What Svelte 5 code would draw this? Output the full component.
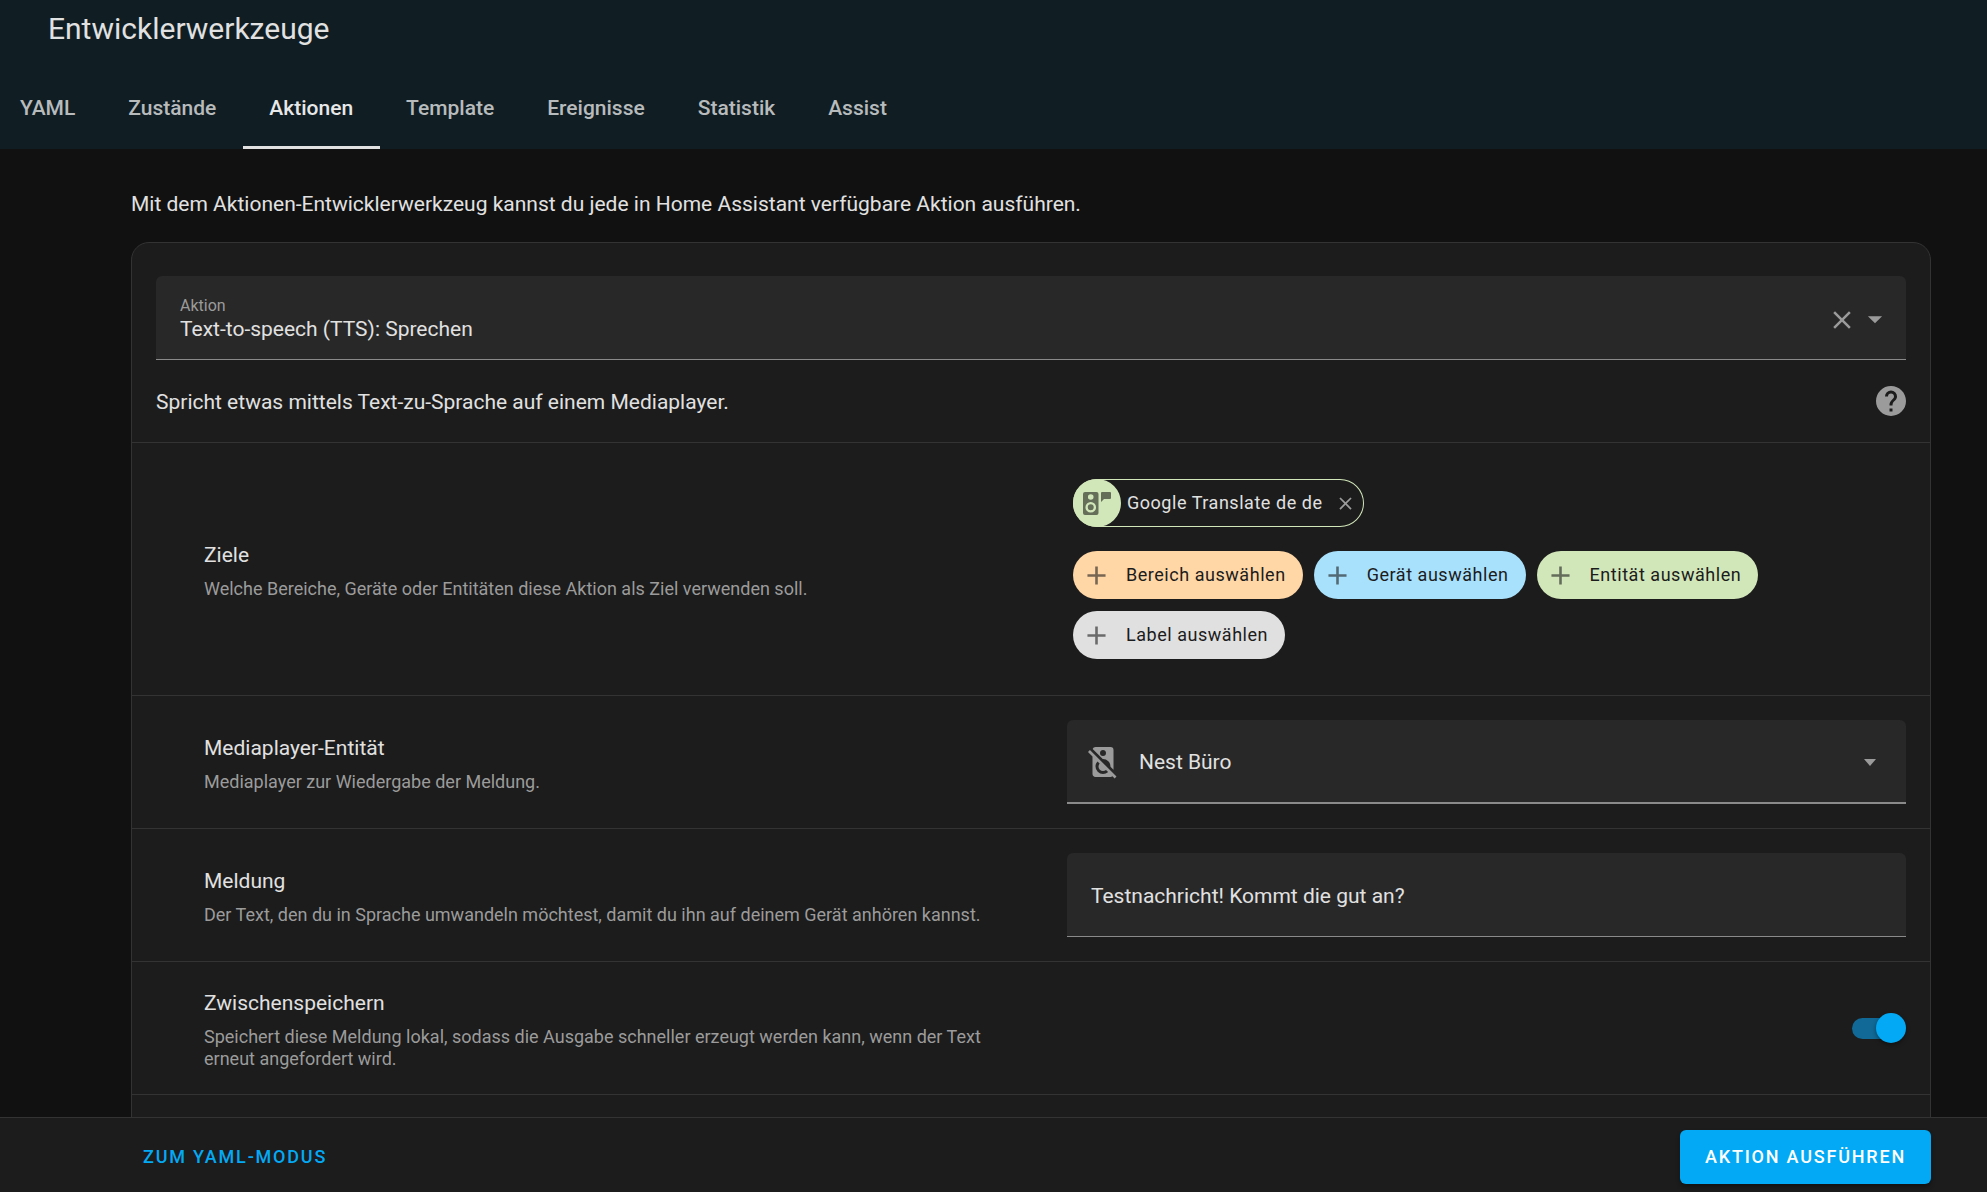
<script lang="ts">
  type Picker = {
    label: string;
    kind: string;
  };

  const tabs = ["YAML", "Zustände", "Aktionen", "Template", "Ereignisse", "Statistik", "Assist"];
  const pickers: Picker[] = [
    { label: "Bereich auswählen", kind: "area" },
    { label: "Gerät auswählen", kind: "device" },
    { label: "Entität auswählen", kind: "entity" },
    { label: "Label auswählen", kind: "label" }
  ];

  let activeTab = "Aktionen";
  let action = "Text-to-speech (TTS): Sprechen";
  let targets = ["Google Translate de de"];
  let player = "Nest Büro";
  let message = "Testnachricht! Kommt die gut an?";
  let cache = true;

  function removeTarget(name: string): void {
    targets = targets.filter((target) => target !== name);
  }
</script>

<div class="page">
  <header class="header">
    <h1 class="title">Entwicklerwerkzeuge</h1>
    <nav class="tabs">
      {#each tabs as tab}
        <button class="tab" class:active={tab === activeTab} type="button" onclick={() => (activeTab = tab)}>
          {tab}
        </button>
      {/each}
    </nav>
  </header>

  <main class="content">
    <p class="intro">Mit dem Aktionen-Entwicklerwerkzeug kannst du jede in Home Assistant verfügbare Aktion ausführen.</p>

    <section class="card">
      <div class="card-top">
        <div class="field action-field">
          <div class="action-text">
            <label for="action">Aktion</label>
            <input id="action" type="text" role="combobox" aria-expanded="false" aria-controls="action" bind:value={action} />
          </div>
          <button class="icon-button" type="button" aria-label="Löschen" onclick={() => (action = "")}>
            <svg class="icon-close" viewBox="0 0 24 24"><path d="M19,6.41L17.59,5L12,10.59L6.41,5L5,6.41L10.59,12L5,17.59L6.41,19L12,13.41L17.59,19L19,17.59L13.41,12L19,6.41Z" /></svg>
          </button>
          <button class="icon-button" type="button" aria-label="Öffnen">
            <svg class="icon-caret" viewBox="0 0 24 24"><path d="M7,10L12,15L17,10H7Z" /></svg>
          </button>
        </div>
        <div class="about">
          <p>Spricht etwas mittels Text-zu-Sprache auf einem Mediaplayer.</p>
          <button class="icon-button help" type="button" aria-label="Hilfe">
            <svg viewBox="2 2 20 20"><path d="M15.07,11.25L14.17,12.17C13.45,12.89 13,13.5 13,15H11V14.5C11,13.39 11.45,12.39 12.17,11.67L13.41,10.41C13.78,10.05 14,9.55 14,9C14,7.89 13.1,7 12,7A2,2 0 0,0 10,9H8A4,4 0 0,1 12,5A4,4 0 0,1 16,9C16,9.88 15.64,10.67 15.07,11.25M13,19H11V17H13M12,2A10,10 0 0,0 2,12A10,10 0 0,0 12,22A10,10 0 0,0 22,12C22,6.47 17.5,2 12,2Z" /></svg>
          </button>
        </div>
      </div>

      <div class="row targets">
        <div class="text">
          <h2>Ziele</h2>
          <p>Welche Bereiche, Geräte oder Entitäten diese Aktion als Ziel verwenden soll.</p>
        </div>
        <div class="control chips">
          <div class="chip-line">
            {#each targets as target}
              <div class="chip target">
                <span class="avatar">
                  <svg viewBox="0 0 28 23">
                    <path fill-rule="evenodd" d="M2,0H13.500A2,2 0 0,1 15.500,2V21A2,2 0 0,1 13.500,23H2A2,2 0 0,1 0,21V2A2,2 0 0,1 2,0M7.750,2.200A2.800,2.800 0 1,0 7.750,7.800A2.800,2.800 0 1,0 7.750,2.200M7.750,10A5.300,5.300 0 1,0 7.750,20.600A5.300,5.300 0 1,0 7.750,10M7.750,12.300A3,3 0 1,1 7.750,18.300A3,3 0 1,1 7.750,12.300Z" />
                    <path d="M19,0H27A1,1 0 0,1 28,1V6A1,1 0 0,1 27,7H21L18,10V1A1,1 0 0,1 19,0Z" />
                  </svg>
                </span>
                <span>{target}</span>
                <button class="icon-button remove" type="button" aria-label="Entfernen" onclick={() => removeTarget(target)}>
                  <svg viewBox="0 0 24 24"><path d="M19,6.41L17.59,5L12,10.59L6.41,5L5,6.41L10.59,12L5,17.59L6.41,19L12,13.41L17.59,19L19,17.59L13.41,12L19,6.41Z" /></svg>
                </button>
              </div>
            {/each}
          </div>
          <div class="chip-line">
            {#each pickers as picker}
              <button class="chip add {picker.kind}" type="button">
                <svg viewBox="0 0 24 24"><path d="M19,13H13V19H11V13H5V11H11V5H13V11H19V13Z" /></svg>
                <span>{picker.label}</span>
              </button>
            {/each}
          </div>
        </div>
      </div>

      <div class="row">
        <div class="text">
          <h2><label for="player">Mediaplayer-Entität</label></h2>
          <p>Mediaplayer zur Wiedergabe der Meldung.</p>
        </div>
        <div class="control field player">
          <svg class="speaker" viewBox="0 0 24 24"><path d="M2,5.27L3.28,4L21,21.72L19.73,23L18.27,21.54C17.93,21.83 17.5,22 17,22H7C5.89,22 5,21.1 5,20V8.27L2,5.27M12,18A3,3 0 0,1 9,15C9,14.24 9.28,13.54 9.75,13L8.33,11.6C7.5,12.5 7,13.69 7,15A5,5 0 0,0 12,20C13.31,20 14.5,19.5 15.4,18.67L14,17.25C13.45,17.72 12.76,18 12,18M17,15A5,5 0 0,0 12,10H11.82L5.12,3.3C5.41,2.54 6.14,2 7,2H17A2,2 0 0,1 19,4V17.18L17,15.17V15M12,4C10.89,4 10,4.89 10,6A2,2 0 0,0 12,8A2,2 0 0,0 14,6C14,4.89 13.1,4 12,4Z" /></svg>
          <select id="player" bind:value={player}>
            <option>Nest Büro</option>
          </select>
          <svg class="select-caret" viewBox="0 0 12 7"><path d="M0,0H12L6,7Z" /></svg>
        </div>
      </div>

      <div class="row">
        <div class="text">
          <h2><label for="message">Meldung</label></h2>
          <p>Der Text, den du in Sprache umwandeln möchtest, damit du ihn auf deinem Gerät anhören kannst.</p>
        </div>
        <div class="control field">
          <input id="message" type="text" bind:value={message} />
        </div>
      </div>

      <div class="row">
        <div class="text">
          <h2><label for="cache">Zwischenspeichern</label></h2>
          <p>Speichert diese Meldung lokal, sodass die Ausgabe schneller erzeugt werden kann, wenn der Text erneut angefordert wird.</p>
        </div>
        <div class="control toggle">
          <input id="cache" type="checkbox" role="switch" bind:checked={cache} />
        </div>
      </div>
      <div class="row"></div>
    </section>
  </main>

  <footer class="footer">
    <button class="btn flat" type="button">ZUM YAML-MODUS</button>
    <button class="btn raised" type="button">AKTION AUSFÜHREN</button>
  </footer>
</div>

<style>
  :global(body) {
    margin: 0;
    background: #111111;
  }

  .page {
    height: 100vh;
    display: flex;
    flex-direction: column;
    overflow: hidden;
    background: #111111;
    color: #e1e1e1;
    font-family: Roboto, "Noto Sans", sans-serif;
    font-size: 21px;
    line-height: 30px;
  }

  button,
  input,
  select {
    box-sizing: border-box;
    margin: 0;
    padding: 0;
    border: 0;
    background: transparent;
    color: inherit;
    font: inherit;
  }

  button {
    cursor: pointer;
  }

  svg {
    display: block;
    flex: none;
    fill: currentColor;
  }

  h1,
  h2,
  p {
    margin: 0;
    font-weight: 400;
  }

  .header {
    flex: none;
    background: #101e24;
  }

  .title {
    padding: 8px 48px 18px;
    font-size: 30px;
    line-height: 41px;
  }

  .tabs {
    display: flex;
    margin-left: -6px;
  }

  .tab {
    height: 82px;
    padding: 3px 27px 0 26px;
    border-bottom: 3px solid transparent;
    color: #b8bbbc;
    font-weight: 500;
  }

  .tab.active {
    border-bottom-color: #e1e1e1;
    color: #e8e8e8;
  }

  .content {
    flex: 1;
    min-height: 0;
    display: flex;
    flex-direction: column;
    overflow: hidden;
    padding: 40px 56px 0 131px;
  }

  .intro {
    flex: none;
    margin-bottom: 23px;
  }

  .card {
    flex: none;
    background: #1c1c1c;
    border: 1px solid #333333;
    border-radius: 18px;
  }

  .card-top {
    padding: 33px 24px 0;
  }

  .field {
    box-sizing: border-box;
    height: 84px;
    display: flex;
    align-items: center;
    background: #282828;
    border-bottom: 1px solid #8a8a8a;
    border-radius: 6px 6px 0 0;
    padding: 2px 24px 0;
  }

  .field input,
  .field select {
    flex: 1;
    min-width: 0;
    width: 100%;
    outline: none;
  }

  .action-field {
    gap: 1px;
    padding-right: 14px;
  }

  .action-text {
    flex: 1;
    display: flex;
    flex-direction: column;
  }

  .action-text label {
    color: #9b9b9b;
    font-size: 16px;
    line-height: 20px;
  }

  .action-text input {
    flex: none;
    height: 26px;
  }

  .icon-button {
    display: flex;
    align-items: center;
    justify-content: center;
    color: #9b9b9b;
  }

  .icon-close {
    width: 30px;
    height: 30px;
    margin-top: 2px;
  }

  .icon-caret {
    width: 34px;
    height: 34px;
  }

  .about {
    display: flex;
    align-items: center;
    justify-content: space-between;
    height: 82px;
  }

  .about p {
    padding-top: 2px;
  }

  .help svg {
    width: 30px;
    height: 30px;
  }

  .row {
    display: flex;
    align-items: center;
    min-height: 84px;
    padding: 24px 24px 24px 72px;
    border-top: 1px solid #333333;
  }

  .row.targets {
    padding-top: 36px;
    padding-bottom: 36px;
  }

  .text {
    flex: 1;
    padding: 2px 64px 0 0;
  }

  .text h2 {
    margin-bottom: 8px;
    font-size: 21px;
    line-height: 30px;
  }

  .text p {
    color: #9b9b9b;
    font-size: 18px;
    line-height: 22px;
  }

  .control {
    flex: none;
    width: 49.3%;
  }

  .chips {
    box-sizing: border-box;
    display: flex;
    flex-direction: column;
    gap: 24px;
    padding-left: 6px;
  }

  .chip-line {
    display: flex;
    flex-wrap: wrap;
    gap: 12px 11px;
  }

  .chip {
    box-sizing: border-box;
    height: 48px;
    display: flex;
    align-items: center;
    border-radius: 24px;
    font-size: 18px;
    letter-spacing: 0.03em;
    white-space: nowrap;
  }

  .target {
    gap: 6px;
    padding-right: 6px;
    box-shadow: inset 0 0 0 1px #d2e7b9;
  }

  .avatar {
    width: 48px;
    height: 48px;
    display: flex;
    align-items: center;
    justify-content: center;
    border-radius: 50%;
    background: #d2e7b9;
    color: #646e58;
  }

  .avatar svg {
    width: 28px;
    height: 23px;
  }

  .remove {
    width: 24px;
    height: 24px;
    margin-left: 5px;
  }

  .remove svg {
    width: 21px;
    height: 21px;
  }

  .add {
    gap: 14px;
    padding: 0 17px 0 8px;
    color: #1c1c1c;
  }

  .add svg {
    width: 31px;
    height: 31px;
    opacity: 0.6;
  }

  .area {
    background: #ffd6a5;
  }

  .device {
    background: #a8e1fc;
  }

  .entity {
    background: #d2e7b9;
  }

  .label {
    background: #e0e0e0;
  }

  .player {
    padding: 2px 30px 0 18px;
    border-bottom-width: 2px;
  }

  .player select {
    height: 60px;
    padding-left: 18px;
    appearance: none;
  }

  .player option {
    background: #282828;
  }

  .speaker {
    width: 36px;
    height: 36px;
    color: #9b9b9b;
  }

  .select-caret {
    width: 12px;
    height: 7px;
    color: #9b9b9b;
  }

  .toggle {
    display: flex;
    justify-content: flex-end;
  }

  .toggle input {
    appearance: none;
    display: flex;
    align-items: center;
    width: 54px;
    height: 30px;
    cursor: pointer;
  }

  .toggle input::before {
    content: "";
    flex: none;
    width: 48px;
    height: 21px;
    border-radius: 11px;
    background: #555555;
  }

  .toggle input::after {
    content: "";
    flex: none;
    width: 30px;
    height: 30px;
    margin-left: -48px;
    border-radius: 50%;
    background: #bdbdbd;
    box-shadow: 0 2px 4px rgba(0, 0, 0, 0.4);
  }

  .toggle input:checked::before {
    background: #106996;
  }

  .toggle input:checked::after {
    margin-left: -24px;
    background: #03a9f4;
  }

  .footer {
    flex: none;
    display: flex;
    align-items: center;
    justify-content: space-between;
    padding: 12px 56px 8px 131px;
    border-top: 1px solid #333333;
    background: #1c1c1c;
  }

  .btn {
    height: 54px;
    border-radius: 6px;
    font-size: 18px;
    font-weight: 500;
    letter-spacing: 0.1em;
  }

  .flat {
    padding: 0 12px;
    color: #03a9f4;
  }

  .raised {
    padding: 0 25px;
    background: #03a9f4;
    color: #ffffff;
    box-shadow: 0 3px 4px rgba(0, 0, 0, 0.35);
  }
</style>
